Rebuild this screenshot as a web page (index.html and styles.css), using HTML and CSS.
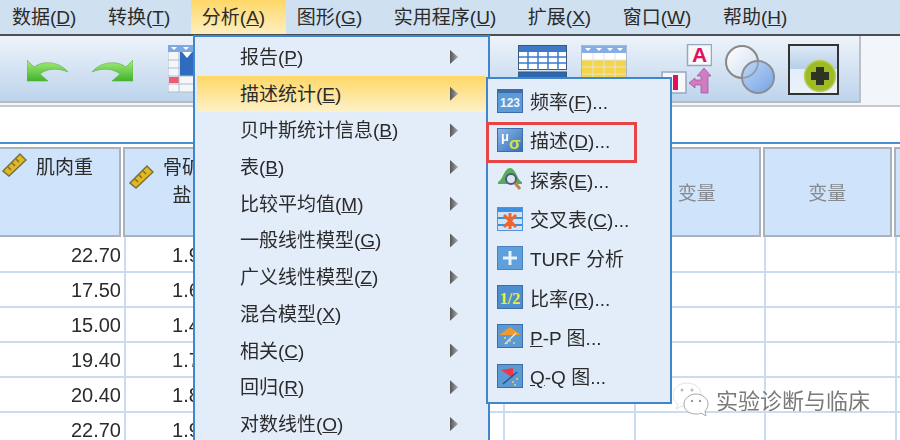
FILE: index.html
```html
<!DOCTYPE html>
<html lang="zh-CN">
  <head>
    <meta charset="UTF-8" />
    <title>分析 | 描述统计</title>
    <link rel="stylesheet" href="styles.css">
  </head>
  <body>
    <div class="app">
      <!-- ========== MENU BAR ========== -->
      <div class="menubar">
        <span class="menubar-item">数据(<u>D</u>)</span>
        <span class="menubar-item">转换(<u>T</u>)</span>
        <span class="menubar-item active">分析(<u>A</u>)</span>
        <span class="menubar-item">图形(<u>G</u>)</span>
        <span class="menubar-item">实用程序(<u>U</u>)</span>
        <span class="menubar-item">扩展(<u>X</u>)</span>
        <span class="menubar-item">窗口(<u>W</u>)</span>
        <span class="menubar-item">帮助(<u>H</u>)</span>
      </div>

      <!-- ========== TOOLBAR ========== -->
      <div class="toolbar-row">
        <div class="toolbar">
          <svg class="tool tool-undo" width="42" height="24" viewBox="0 0 42 24">
            <defs>
              <linearGradient id="green" x1="0" y1="0" x2="0" y2="1">
                <stop offset="0" stop-color="#a6ec7c" />
                <stop offset="1" stop-color="#3fb52c" />
              </linearGradient>
            </defs>
            <path d="M0 0V21H21L13 14C20 8 32 8 41 12C34 3 18 -1 7 7Z" fill="url(#green)" stroke="#5fae45" stroke-width=".6" />
          </svg>
          <svg class="tool tool-redo" width="42" height="24" viewBox="0 0 42 24">
            <path d="M42 0V21H21L29 14C22 8 10 8 1 12C8 3 24 -1 35 7Z" fill="url(#green)" stroke="#5fae45" stroke-width=".6" />
          </svg>
          <svg class="tool tool-table" width="30" height="48" viewBox="0 0 30 48">
            <rect x="0" y="0" width="30" height="47" fill="#f4f6f9" stroke="#aebdcd" />
            <rect x="0" y="0" width="30" height="7" fill="#7fa8e0" />
            <path d="M3 2H9L6 5ZM15 2H21L18 5Z" fill="#fff" />
            <rect x="12" y="7" width="18" height="24" fill="#2f6cc0" />
            <path d="M14 7H24L19 13Z" fill="#fff" />
            <rect x="1" y="32" width="10" height="6" fill="#ef5a70" />
            <path d="M0 15H12M0 23H12M0 31H30M0 39H30M11 7V47" stroke="#aebdcd" fill="none" />
          </svg>
          <svg class="tool tool-vars" width="50" height="36" viewBox="0 0 50 36">
            <rect x=".5" y=".5" width="48" height="24" fill="#fff" stroke="#39597f" />
            <rect x="1" y="1" width="47" height="6" fill="#3f78c4" />
            <path d="M1 12H48M1 18H48M10 7V25M20 7V25M30 7V25M40 7V25" stroke="#3a7ccf" stroke-width="1.5" fill="none" />
            <rect x=".5" y="27" width="48" height="9" fill="#2f66b4" stroke="#39597f" />
          </svg>
          <svg class="tool tool-cases" width="47" height="36" viewBox="0 0 47 36">
            <rect x=".5" y=".5" width="45" height="35" fill="#fff" stroke="#a6bad0" />
            <rect x="1" y="1" width="44" height="7" fill="#86aee4" />
            <path d="M4 3H10L7 6ZM15 3H21L18 6ZM26 3H32L29 6ZM36 3H42L39 6Z" fill="#fff" />
            <rect x="1" y="15" width="44" height="20" fill="#f5d445" />
            <path d="M1 15H45M1 22H45M1 29H45M12 8V35M23 8V35M34 8V35" stroke="#dfe3e8" fill="none" />
          </svg>
          <svg class="tool tool-select" width="51" height="50" viewBox="0 0 51 50">
            <rect x="1" y="28" width="24" height="21" fill="#f6f7f9" stroke="#93a9c0" stroke-width="1.5" />
            <rect x="12" y="31" width="5" height="15" fill="#e0105c" />
            <rect x="26.500" y=".5" width="24" height="21" fill="#f7f8fa" stroke="#93a9c0" stroke-width="1.500" />
            <text x="38.500" y="18" class="tool-letter">A</text>
            <path d="M43 24L50 32H47V49H40V41H34V44L28 39L34 34V36H40V32H36Z" fill="#cf7cc0" stroke="#a04e98" stroke-width=".7" />
          </svg>
          <svg class="tool tool-venn" width="50" height="50" viewBox="0 0 50 50">
            <defs>
              <linearGradient id="vennA" x1="0" y1="0" x2="1" y2="1">
                <stop offset="0" stop-color="#fff" />
                <stop offset="1" stop-color="#cfdcf0" />
              </linearGradient>
              <linearGradient id="vennB" x1="0" y1="0" x2="1" y2="1">
                <stop offset="0" stop-color="#bcd3f2" />
                <stop offset="1" stop-color="#5f96e6" />
              </linearGradient>
            </defs>
            <circle cx="17" cy="18" r="16" fill="url(#vennA)" stroke="#8a8a8a" stroke-width="2" />
            <circle cx="33" cy="33" r="16" fill="url(#vennB)" fill-opacity=".8" stroke="#8a8f96" stroke-width="2" />
            <circle cx="17" cy="18" r="16" fill="none" stroke="#8a8a8a" stroke-opacity=".6" stroke-width="1.500" />
          </svg>
          <svg class="tool tool-plus" width="51" height="51" viewBox="0 0 51 51">
            <defs>
              <linearGradient id="plusBg" x1="0" y1="0" x2="0" y2="1">
                <stop offset="0" stop-color="#dfeaf6" />
                <stop offset=".48" stop-color="#b6cfe9" />
                <stop offset=".49" stop-color="#e4eefa" />
                <stop offset="1" stop-color="#eaf2fb" />
              </linearGradient>
            </defs>
            <rect x="1" y="1" width="49" height="49" fill="url(#plusBg)" stroke="#333" stroke-width="2" />
            <circle cx="32" cy="32" r="15.500" fill="#9dbb24" stroke="#b9cf5c" stroke-width="1.500" />
            <path d="M28 23H36V28H41V36H36V41H28V36H23V28H28Z" fill="#2f3324" />
          </svg>
        </div>
      </div>

      <!-- ========== CELL EDIT ROW ========== -->
      <div class="cell-row"></div>

      <!-- ========== DATA GRID ========== -->
      <table class="grid">
        <colgroup>
          <col class="col-a" />
          <col class="col-b" />
          <col class="col-c" />
          <col class="col-c" />
          <col class="col-d" />
          <col class="col-d" />
          <col class="col-d" />
          <col class="col-d" />
        </colgroup>
        <thead>
          <tr>
            <th>
              <div class="head head-named">
                <svg class="ruler" width="25" height="25" viewBox="0 0 25 25">
                  <path d="M1 19L18 2L24 8L7 24Z" fill="#e2b720" stroke="#77703f" stroke-width="1.500" />
                  <path d="M6 15L9 18M10 11L13 14M14 7L17 10" stroke="#77703f" stroke-width="1.500" />
                </svg>
                <span class="head-label">肌肉重</span>
              </div>
            </th>
            <th>
              <div class="head head-named">
                <svg class="ruler ruler-low" width="25" height="25" viewBox="0 0 25 25">
                  <path d="M1 19L18 2L24 8L7 24Z" fill="#e2b720" stroke="#77703f" stroke-width="1.500" />
                  <path d="M6 15L9 18M10 11L13 14M14 7L17 10" stroke="#77703f" stroke-width="1.500" />
                </svg>
                <span class="head-label">骨矿<br />盐</span>
              </div>
            </th>
            <th><div class="head"></div></th>
            <th><div class="head"></div></th>
            <th><div class="head"></div></th>
            <th><div class="head">变量</div></th>
            <th><div class="head">变量</div></th>
            <th><div class="head"></div></th>
          </tr>
        </thead>
        <tbody>
          <tr><td>22.70</td><td>1.90</td><td></td><td></td><td></td><td></td><td></td><td></td></tr>
          <tr><td>17.50</td><td>1.60</td><td></td><td></td><td></td><td></td><td></td><td></td></tr>
          <tr><td>15.00</td><td>1.40</td><td></td><td></td><td></td><td></td><td></td><td></td></tr>
          <tr><td>19.40</td><td>1.70</td><td></td><td></td><td></td><td></td><td></td><td></td></tr>
          <tr><td>20.40</td><td>1.80</td><td></td><td></td><td></td><td></td><td></td><td></td></tr>
          <tr><td>22.70</td><td>1.90</td><td></td><td></td><td></td><td></td><td></td><td></td></tr>
        </tbody>
      </table>

      <!-- ========== ANALYZE MENU ========== -->
      <div class="menu">
        <div class="menu-item">报告(<u>P</u>)<i class="arrow"></i></div>
        <div class="menu-item active">描述统计(<u>E</u>)<i class="arrow"></i></div>
        <div class="menu-item">贝叶斯统计信息(<u>B</u>)<i class="arrow"></i></div>
        <div class="menu-item">表(<u>B</u>)<i class="arrow"></i></div>
        <div class="menu-item">比较平均值(<u>M</u>)<i class="arrow"></i></div>
        <div class="menu-item">一般线性模型(<u>G</u>)<i class="arrow"></i></div>
        <div class="menu-item">广义线性模型(<u>Z</u>)<i class="arrow"></i></div>
        <div class="menu-item">混合模型(<u>X</u>)<i class="arrow"></i></div>
        <div class="menu-item">相关(<u>C</u>)<i class="arrow"></i></div>
        <div class="menu-item">回归(<u>R</u>)<i class="arrow"></i></div>
        <div class="menu-item">对数线性(<u>O</u>)<i class="arrow"></i></div>
      </div>

      <!-- ========== SUBMENU ========== -->
      <div class="submenu">
        <div class="sub-item">
          <svg class="sub-icon" width="26" height="24" viewBox="0 0 26 24">
            <rect x=".5" y=".5" width="25" height="23" fill="#5b9bd8" stroke="#3d6ca8" />
            <rect x="1" y="1" width="24" height="3" fill="#3d6ca8" />
            <text x="13" y="18" class="icon-num">123</text>
          </svg>
          <span>频率(<u>F</u>)...</span>
        </div>
        <div class="sub-item">
          <svg class="sub-icon" width="26" height="24" viewBox="0 0 26 24">
            <defs>
              <linearGradient id="muBg" x1="0" y1="0" x2="1" y2="1">
                <stop offset="0" stop-color="#8fb8e6" />
                <stop offset="1" stop-color="#2f6fbe" />
              </linearGradient>
            </defs>
            <rect x=".5" y=".5" width="25" height="23" fill="url(#muBg)" stroke="#3d6ca8" />
            <text x="4" y="13" class="icon-mu">μ</text>
            <text x="12" y="21" class="icon-sigma">σ</text>
          </svg>
          <span>描述(<u>D</u>)...</span>
        </div>
        <div class="sub-item">
          <svg class="sub-icon" width="26" height="24" viewBox="0 0 26 24">
            <path d="M1 15C6 13 7 1 13 1C19 1 20 13 25 15L25 17H1Z" fill="#58ad5c" />
            <circle cx="14" cy="12" r="5" fill="#dbe5f2" stroke="#4a5a78" stroke-width="2" />
            <path d="M18 16L23 22" stroke="#c2824a" stroke-width="3" />
          </svg>
          <span>探索(<u>E</u>)...</span>
        </div>
        <div class="sub-item">
          <svg class="sub-icon" width="26" height="24" viewBox="0 0 26 24">
            <rect x=".5" y=".5" width="25" height="23" fill="#cfe3f7" stroke="#4f94dc" />
            <path d="M1 1H25V5H1ZM1 10H25V12H1ZM1 17H25V19H1Z" fill="#3f8fe0" />
            <path d="M13 6V22M7 8L19 20M19 8L7 20" stroke="#f0642c" stroke-width="3" />
          </svg>
          <span>交叉表(<u>C</u>)...</span>
        </div>
        <div class="sub-item">
          <svg class="sub-icon" width="26" height="24" viewBox="0 0 26 24">
            <rect x=".5" y=".5" width="25" height="23" fill="#5f9fdc" stroke="#4a82c2" />
            <path d="M13 5V19M6 12H20" stroke="#e8f2fc" stroke-width="3" />
          </svg>
          <span>TURF 分析</span>
        </div>
        <div class="sub-item">
          <svg class="sub-icon" width="26" height="24" viewBox="0 0 26 24">
            <rect x=".5" y=".5" width="25" height="23" fill="#4d8ed0" stroke="#3d6ca8" />
            <text x="13" y="19" class="icon-ratio">1/2</text>
          </svg>
          <span>比率(<u>R</u>)...</span>
        </div>
        <div class="sub-item">
          <svg class="sub-icon" width="26" height="24" viewBox="0 0 26 24">
            <rect x=".5" y=".5" width="25" height="23" fill="#5c9ad6" stroke="#3d6ca8" />
            <path d="M2 11L13 3L24 11Z" fill="#f09a2c" />
            <path d="M8 20L19 9" stroke="#d8e8f6" stroke-width="1.500" />
            <path d="M7 14H9M12 17H14M16 19H18M9 19H11" stroke="#e9d65a" stroke-width="1.500" />
          </svg>
          <span><u>P</u>-P 图...</span>
        </div>
        <div class="sub-item">
          <svg class="sub-icon" width="26" height="24" viewBox="0 0 26 24">
            <rect x=".5" y=".5" width="25" height="23" fill="#5c9ad6" stroke="#3d6ca8" />
            <path d="M4 6L16 4V14Z" fill="#e83a48" />
            <path d="M6 20L20 8" stroke="#24508c" stroke-width="1.500" />
            <path d="M15 18H17M19 15H21M17 21H19" stroke="#e9d65a" stroke-width="1.500" />
          </svg>
          <span><u>Q</u>-Q 图...</span>
        </div>
        <div class="mark"></div>
      </div>

      <!-- ========== WATERMARK ========== -->
      <div class="watermark">
        <svg width="36" height="34" viewBox="0 0 36 34">
          <path d="M14 1C6 1 0 6 0 13C0 17 2 20 5 22L3 27L9 24C11 25 12 25 14 25C22 25 28 20 28 13C28 6 22 1 14 1Z" fill="#fff" stroke="#e2e2e2" />
          <path d="M23 12C16 12 11 17 11 22C11 28 16 32 23 32C25 32 26 32 28 31L33 34L32 29C34 27 35 25 35 22C35 17 30 12 23 12Z" fill="#fff" stroke="#a8a8a8" />
          <circle cx="9" cy="8" r="1.500" fill="#bbb" />
          <circle cx="19" cy="8" r="1.500" fill="#bbb" />
          <circle cx="19" cy="19" r="1.200" fill="#999" />
          <circle cx="27" cy="19" r="1.200" fill="#999" />
        </svg>
        <span>实验诊断与临床</span>
      </div>
    </div>
  </body>
</html>
```

FILE: styles.css
```css
* {
  margin: 0;
  padding: 0;
  box-sizing: border-box;
}

html,
body {
  width: 900px;
  height: 440px;
  overflow: hidden;
  background-color: #fff;
}

.app {
  position: relative;
  width: 900px;
  height: 440px;
  overflow: hidden;
  color: #2b2b2b;
  font-family: "Liberation Sans", "Noto Sans CJK SC", sans-serif;
  font-size: 19px;
  filter: blur(0.45px);
}

u {
  text-underline-offset: 1px;
}

/* ========== MENU BAR ========== */
.menubar {
  display: flex;
  height: 36px;
  padding-left: 1px;
  background-color: #cfe0f1;
  border-bottom: 2px solid #4a4f55;
}

.menubar-item {
  padding: 0 20.6px 0 11px;
  line-height: 36px;
  white-space: nowrap;
}

.menubar-item.active {
  background: linear-gradient(#fed766, #fdefc0);
}

/* ========== TOOLBAR ========== */
.toolbar-row {
  height: 71px;
  background-color: #f2f5f9;
  border-bottom: 2px solid #c9c9c9;
}

.toolbar {
  display: flex;
  align-items: flex-start;
  width: 861px;
  height: 67px;
  padding: 8px 0 0 27px;
  background: linear-gradient(#edf3fa, #bdd4ec);
  border-right: 2px solid #bcc0c4;
  border-bottom: 2px solid #b4bcc4;
}

.tool-undo {
  margin-top: 16px;
}

.tool-redo {
  margin: 16px 0 0 22px;
}

.tool-table {
  margin: 1px 0 0 35px;
}

.tool-vars {
  margin: 1px 0 0 320px;
}

.tool-cases {
  margin: 1px 0 0 13px;
}

.tool-select {
  margin: 0 0 0 33px;
}

.tool-venn {
  margin: 0 0 0 13px;
}

.tool-plus {
  margin: 0 0 0 13px;
}

.tool-letter {
  fill: #e0105c;
  font-size: 21px;
  font-weight: bold;
  text-anchor: middle;
}

/* ========== CELL EDIT ROW ========== */
.cell-row {
  height: 37px;
  background-color: #fff;
  border-bottom: 2px solid #4a8fd2;
}

/* ========== DATA GRID ========== */
.grid {
  width: 1026px;
  margin-top: 2px;
  border-collapse: collapse;
  table-layout: fixed;
}

.col-a {
  width: 125px;
}

.col-b {
  width: 90px;
}

.col-c {
  width: 144.5px;
}

.col-d {
  width: 130.5px;
}

th {
  height: 91px;
  padding: 0;
  font-weight: normal;
}

.head {
  display: flex;
  align-items: center;
  justify-content: center;
  height: 90px;
  margin: 0 4px 0 -2px;
  color: #858a90;
  background-color: #cfe3fa;
  border: 2px solid #aab3bc;
}

.head-named {
  align-items: flex-start;
  justify-content: flex-start;
  padding: 5px 0 0 2px;
  color: #2b2b2b;
}

.head-label {
  margin-left: 9px;
  line-height: 28px;
  text-align: center;
}

.ruler {
  flex-shrink: 0;
  margin-top: -2px;
}

.ruler-low {
  margin: 10px 0 0 2px;
}

td {
  height: 35px;
  padding: 2px 3px 0 0;
  font-size: 20px;
  text-align: right;
  border-right: 2px solid #c9dcf1;
  border-bottom: 2px solid #c9dcf1;
}

/* ========== MENUS ========== */
.menu {
  position: absolute;
  top: 35px;
  left: 193px;
  width: 297px;
  height: 420px;
  padding: 2px 2px 0;
  background-color: #e3edfa;
  border: 2px solid #3f86cc;
}

.menu-item {
  position: relative;
  height: 36.7px;
  padding-left: 43px;
  line-height: 38px;
  white-space: nowrap;
}

.menu-item.active {
  background: linear-gradient(#fed766, #fdf1c8);
}

.arrow {
  position: absolute;
  top: 11px;
  left: 253px;
  width: 8px;
  height: 14px;
  background: linear-gradient(90deg, #555, #a8a8a8);
  clip-path: polygon(0 0, 100% 50%, 0 100%);
}

.submenu {
  position: absolute;
  top: 77px;
  left: 486px;
  width: 186px;
  height: 327px;
  padding-top: 2px;
  background-color: #e3edfa;
  border: 2px solid #3f86cc;
}

.sub-item {
  display: flex;
  align-items: center;
  gap: 7px;
  height: 39.3px;
  padding-left: 9px;
  white-space: nowrap;
}

.sub-icon {
  flex-shrink: 0;
}

.icon-num {
  fill: #f0f6fc;
  font-size: 12px;
  font-weight: bold;
  text-anchor: middle;
}

.icon-mu {
  fill: #fff;
  font-size: 13px;
  font-weight: bold;
}

.icon-sigma {
  fill: #d8e04a;
  font-size: 17px;
  font-weight: bold;
}

.icon-ratio {
  fill: #f0ee30;
  font-family: "Liberation Serif", serif;
  font-size: 16px;
  font-weight: bold;
  text-anchor: middle;
}

.mark {
  position: absolute;
  top: 43px;
  left: -2px;
  width: 151px;
  height: 41px;
  border: 3px solid #e64545;
}

/* ========== WATERMARK ========== */
.watermark {
  position: absolute;
  top: 382px;
  left: 673px;
  display: flex;
  align-items: center;
  gap: 7px;
  color: #7a7a7a;
  font-size: 22px;
  text-shadow: 0 0 2px #fff, 0 0 2px #fff;
}
```
